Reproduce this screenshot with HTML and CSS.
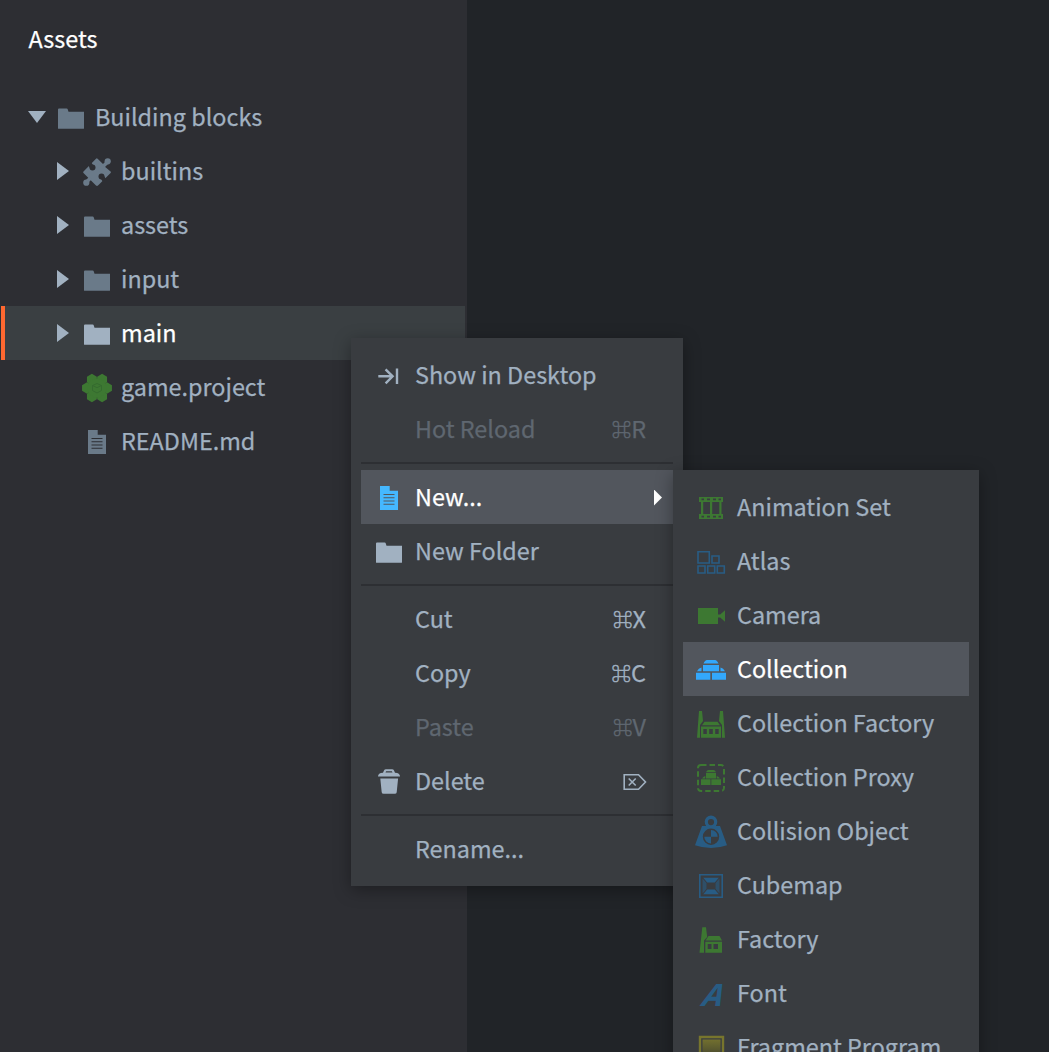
FILE: index.html
```html
<!DOCTYPE html>
<html lang="en">
<head>
<meta charset="utf-8">
<title>Assets</title>
<link rel="stylesheet" href="styles.css">
</head>
<body>
<svg class="defs" width="0" height="0">
  <defs>
    <symbol id="folder" viewBox="0 0 32 32"><path d="M3 27.2V8.4Q3 7.4 4 7.4h7.6q1 0 1.2 1l.7 2.4H29v16.4q0 .6-.6.6H3.600q-.6 0-.6-.6z"/></symbol>
    <symbol id="doc" viewBox="0 0 32 32"><path fill-rule="evenodd" d="M7 5h9.700v4.800H25V29H7zM10.500 13h11v1h-11zM10.500 16.200h11v1h-11zM10.500 19.500h11v1h-11zM10.500 22.800h11v1h-11z"/></symbol>
    <path id="hex" d="M0-5.700L4.950-2.850v5.700L0 5.700l-4.950-2.850v-5.700z"/>
    <linearGradient id="shade" x1="0" y1="0" x2="0" y2="1"><stop offset="0" stop-color="#72702f"/><stop offset="1" stop-color="#44452f"/></linearGradient>
    <mask id="notches" maskUnits="userSpaceOnUse" x="0" y="0" width="32" height="32"><rect width="32" height="32" fill="#fff"/><circle cx="11.500" cy="12.500" r="3"/><path d="M7 10l3-3 2 3-3 3z"/><circle cx="20.500" cy="21.500" r="3"/><path d="M25 24l-3 3-2-3 3-3z"/></mask>
  </defs>
</svg>
<div class="app">
  <aside class="assets">
    <h1 class="assets-title">Assets</h1>
    <ul class="tree">
      <li class="node root"><i class="arrow open"></i><svg class="icon"><use href="#folder"/></svg><span>Building blocks</span></li>
      <li class="node"><i class="arrow"></i><svg class="icon" viewBox="0 0 32 32"><g mask="url(#notches)"><path d="M15 3.700q.8-.8 1.600 0L22 9l2 1-.4 1.500L29.600 16.500q.7.700 0 1.500L17 30.500q-1 .8-2 0L2.500 18q-.8-.8 0-1.600z"/></g><circle cx="26.700" cy="6.300" r="3.100"/><path d="M21 10l4-4 2.500 2.500-4 4zM11 24l-4 4-2.500-2.500 4-4z"/><circle cx="5.300" cy="27.700" r="3.100"/></svg><span>builtins</span></li>
      <li class="node"><i class="arrow"></i><svg class="icon"><use href="#folder"/></svg><span>assets</span></li>
      <li class="node"><i class="arrow"></i><svg class="icon"><use href="#folder"/></svg><span>input</span></li>
      <li class="node selected"><i class="arrow"></i><svg class="icon"><use href="#folder"/></svg><span>main</span></li>
      <li class="node"><i class="arrow none"></i><svg class="icon green" viewBox="0 0 32 32"><use href="#hex" x="10.900" y="8.500"/><use href="#hex" x="21.100" y="8.500"/><use href="#hex" x="6" y="17"/><use href="#hex" x="26" y="17"/><use href="#hex" x="10.900" y="25.500"/><use href="#hex" x="21.100" y="25.500"/><circle cx="16" cy="17" r="9.500"/><path class="cube" d="M16 12.500l4.500 2v5L16 22l-4.500-2.500v-5zM11.500 14.500l4.500 2.200 4.500-2.200"/></svg><span>game.project</span></li>
      <li class="node"><i class="arrow none"></i><svg class="icon"><use href="#doc"/></svg><span>README.md</span></li>
    </ul>
  </aside>

  <ul class="menu context">
    <li class="item"><svg class="icon" viewBox="0 0 32 32"><path class="line heavy" d="M5.300 17.300H20M12.600 10.300l7 7-7 7M24 9.500v15.500"/></svg><span>Show in Desktop</span></li>
    <li class="item disabled"><i class="icon"></i><span>Hot Reload</span><kbd><b>⌘</b>R</kbd></li>
    <li class="separator"></li>
    <li class="item active"><svg class="icon bright"><use href="#doc"/></svg><span>New...</span><i class="more"></i></li>
    <li class="item"><svg class="icon"><use href="#folder"/></svg><span>New Folder</span></li>
    <li class="separator"></li>
    <li class="item"><i class="icon"></i><span>Cut</span><kbd><b>⌘</b>X</kbd></li>
    <li class="item"><i class="icon"></i><span>Copy</span><kbd><b>⌘</b>C</kbd></li>
    <li class="item disabled"><i class="icon"></i><span>Paste</span><kbd><b>⌘</b>V</kbd></li>
    <li class="item"><svg class="icon" viewBox="0 0 32 32"><path fill-rule="evenodd" d="M5 11.500Q5 8 10 7.800l1-2.300q.5-1.200 2-1.200h6q1.500 0 2 1.200l1 2.300q5 .2 5 3.700zM12.500 7.600h7l-.6-1.300h-5.800zM7.300 13.500h17.800l-1.400 13.700q-.2 1.600-1.900 1.600H10.600q-1.700 0-1.900-1.600z"/></svg><span>Delete</span><svg class="del-key" viewBox="0 0 24 18"><path d="M1.200 1.700h14.300l7 7.300-7 7.300H1.200zM5.700 5.500l7 7M12.700 5.500l-7 7"/></svg></li>
    <li class="separator"></li>
    <li class="item"><i class="icon"></i><span>Rename...</span></li>
  </ul>

  <ul class="menu submenu">
    <li class="item"><svg class="icon green" viewBox="0 0 32 32"><path fill-rule="evenodd" d="M4 6h24v5H4zM4 23h24v5H4zM6.500 7.500v1.800H9V7.500zM12 7.500v1.800h3V7.500zM18 7.500v1.800h3V7.500zM23.500 7.500v1.800H26V7.500zM6.500 24.700v1.800H9v-1.800zM12 24.700v1.800h3v-1.800zM18 24.700v1.800h3v-1.800zM23.500 24.700v1.800H26v-1.800z"/><path d="M6 10h2.200v14H6zM15 10h2.200v14H15zM24.300 10h2.200v14h-2.200z"/></svg><span>Animation Set</span></li>
    <li class="item"><svg class="icon blue" viewBox="0 0 32 32"><path class="line" d="M3 6.700h11.300v11.300H3zM17 11h7v7h-7zM3 21h7v7H3zM12.700 21h7v7h-7zM22.300 21h7v7h-7z"/></svg><span>Atlas</span></li>
    <li class="item"><svg class="icon green" viewBox="0 0 32 32"><path d="M3 9h20v16H3zM23.500 17L30 11.200v11.600zM22 15.500h3v3h-3z"/></svg><span>Camera</span></li>
    <li class="item active"><svg class="icon bright2" viewBox="0 0 32 32"><path d="M8.500 10.500Q10 7 12 7h8q2 0 3.500 3.500zM8 12h16v6.300H8zM2 18.300Q3.500 15 6.500 14.500v3.800zM30 18.300Q28.500 15 25.500 14.500v3.800zM1 19.800h14.300v7H1zM17 19.800h14v7H17z"/></svg><span>Collection</span></li>
    <li class="item"><svg class="icon green" viewBox="0 0 32 32"><path fill-rule="evenodd" d="M4 4h3l1 10-3 4V30.700H2zM25 4h3l2 26.700h-3V18l-3-4zM9.500 14.700h13l2.500 3.500H7zM6 19.500h20v11.200H6zM8.300 22v5h3.500v-5zM14.200 22v5h3.600v-5zM20.200 22v5h3.500v-5z"/></svg><span>Collection Factory</span></li>
    <li class="item"><svg class="icon green" viewBox="0 0 32 32"><rect class="line dashed" x="3" y="4" width="26" height="26" rx="3"/><path d="M11 11.300Q12 9 13.500 9h5q1.500 0 2.500 2.300zM11 12h10v5.500H11zM7 17.500Q8 15.500 10.300 15v2.500zM25 17.500Q24 15.500 21.700 15v2.500zM6 18.300h9.500V24H6zM16.300 18.300H26V24h-9.700z"/></svg><span>Collection Proxy</span></li>
    <li class="item"><svg class="icon blue" viewBox="0 0 32 32"><path fill-rule="evenodd" d="M7 11h4.200a6.300 6.300 0 1 1 9.600 0H25l7 19.200Q24 33 16 33T0 30.200zM16 4a3.100 3.100 0 1 0 0 6.200A3.100 3.100 0 0 0 16 4zM16 13.500a8.200 8.200 0 1 0 0 16.400 8.200 8.200 0 0 0 0-16.400z"/><path d="M16 15a6.700 6.700 0 0 1 6.700 6.700H16zM16 28.400a6.700 6.700 0 0 1-6.700-6.700H16z"/></svg><span>Collision Object</span></li>
    <li class="item"><svg class="icon blue" viewBox="0 0 32 32"><path class="line" d="M4.800 5.800h22.400v22.400H4.800z"/><path d="M8.200 8.700h15.600L19.800 13.500h-7.600zM8.200 25.300h15.600L19.800 20.500h-7.600z"/><path opacity=".6" d="M7.500 9.500l4 4.500v6l-4 4.500zM24.500 9.500l-4 4.500v6l4 4.500z"/></svg><span>Cubemap</span></li>
    <li class="item"><svg class="icon green" viewBox="0 0 32 32"><path fill-rule="evenodd" d="M7.300 4.300H11l1.200 9.700L9 17.500v12.300H4.500zM13.500 13h11l2.500 4.500H10.500zM10.300 18.700H27v11H10.300zM12.700 21v5h3.800v-5zM18.500 21v5h4.500v-5z"/></svg><span>Factory</span></li>
    <li class="item"><svg class="icon blue" viewBox="0 0 32 32"><text class="letter" transform="translate(6.600 28.600) skewX(-12) scale(1.050 1)">A</text></svg><span>Font</span></li>
    <li class="item"><svg class="icon olive" viewBox="0 0 32 32"><path class="line heavy" d="M5 6h23v23H5z"/><rect x="7.500" y="8.500" width="18" height="18" fill="url(#shade)"/></svg><span>Fragment Program</span></li>
  </ul>
</div>
</body>
</html>
```
FILE: styles.css
```css
* { box-sizing: border-box; }
body {
  margin: 0;
  background: #212428;
  color: #a1b1c1;
  font: 23.380px/54px "Noto Sans CJK SC", "Noto Sans", sans-serif;
  -webkit-text-stroke: .25px;
}
ul { list-style: none; margin: 0; padding: 0; }
.defs { display: block; position: absolute; }
.app { position: relative; width: 1049px; height: 1052px; overflow: hidden; }

.assets { width: 467px; height: 1052px; background: #2d2e33; padding-right: 2px; }
.assets-title {
  margin: 0;
  padding: 11px 0 25px 28.500px;
  font-size: inherit;
  font-weight: 400;
  color: #fff;
}
.node { display: flex; align-items: center; height: 54px; padding-left: 54px; white-space: nowrap; }
.node span, .item span, kbd { padding-bottom: 2px; }
.node.root { padding-left: 28px; }
.node .icon { fill: #6a7a89; margin-right: 8px; }
.node.selected { background: linear-gradient(to right, transparent 1px, #ff6830 1px, #ff6830 5px, #3a3f42 5px); color: #fff; }
.node.selected .icon { fill: #a1b1c1; }
.arrow { flex: none; width: 12px; height: 18px; margin: 0 12px 0 3px; background: #a1b1c1; clip-path: polygon(0 0, 100% 50%, 0 100%); }
.arrow.open { width: 18px; height: 12px; margin: 0 9px 0 0; clip-path: polygon(0 0, 100% 0, 50% 100%); }
.arrow.none { visibility: hidden; }

.icon { flex: none; display: block; width: 32px; height: 32px; overflow: visible; fill: #a1b1c1; color: #a1b1c1; }
.menu { position: absolute; padding: 10px; background: #393c40; box-shadow: 0 4px 16px rgba(0, 0, 0, .35); }
.context { left: 351px; top: 338px; width: 332px; }
.submenu { left: 673px; top: 470px; width: 306px; }
.item { display: flex; align-items: center; height: 54px; padding: 0 27px 0 12px; white-space: nowrap; }
.item .icon { margin-right: 10px; }
.item.active { background: #52565d; color: #fff; }
.item.disabled { color: #5f6770; }
.separator { height: 2px; margin: 6px 0; background: #2d2f33; }
kbd { margin-left: auto; font: inherit; }
kbd b { font-size: 19.500px; font-weight: 400; line-height: 1; vertical-align: 1px; -webkit-text-stroke: .5px; }
.more { width: 8px; height: 16px; margin: 1px -16px 0 auto; background: #fff; clip-path: polygon(0 0, 100% 50%, 0 100%); }
.del-key { width: 24px; height: 18px; margin: 2px -1px 0 auto; fill: none; stroke: #a1b1c1; stroke-width: 1.6; }

.node .green, .item .green { fill: #3d7832; color: #3d7832; }
.item .blue { fill: #285c84; color: #285c84; }
.item .olive { fill: #77752d; color: #77752d; }
.item .bright { fill: #45b8ff; }
.item .bright2 { fill: #33a8fc; }
.line { fill: none; stroke: currentColor; stroke-width: 1.6; }
.heavy { stroke-width: 2.4; }
.dashed { stroke-width: 2; stroke-dasharray: 5.500 3; }
.cube { fill: none; stroke: #356b2f; stroke-width: 1; }
.letter { font: italic 700 31px "Open Sans", sans-serif; }
```
